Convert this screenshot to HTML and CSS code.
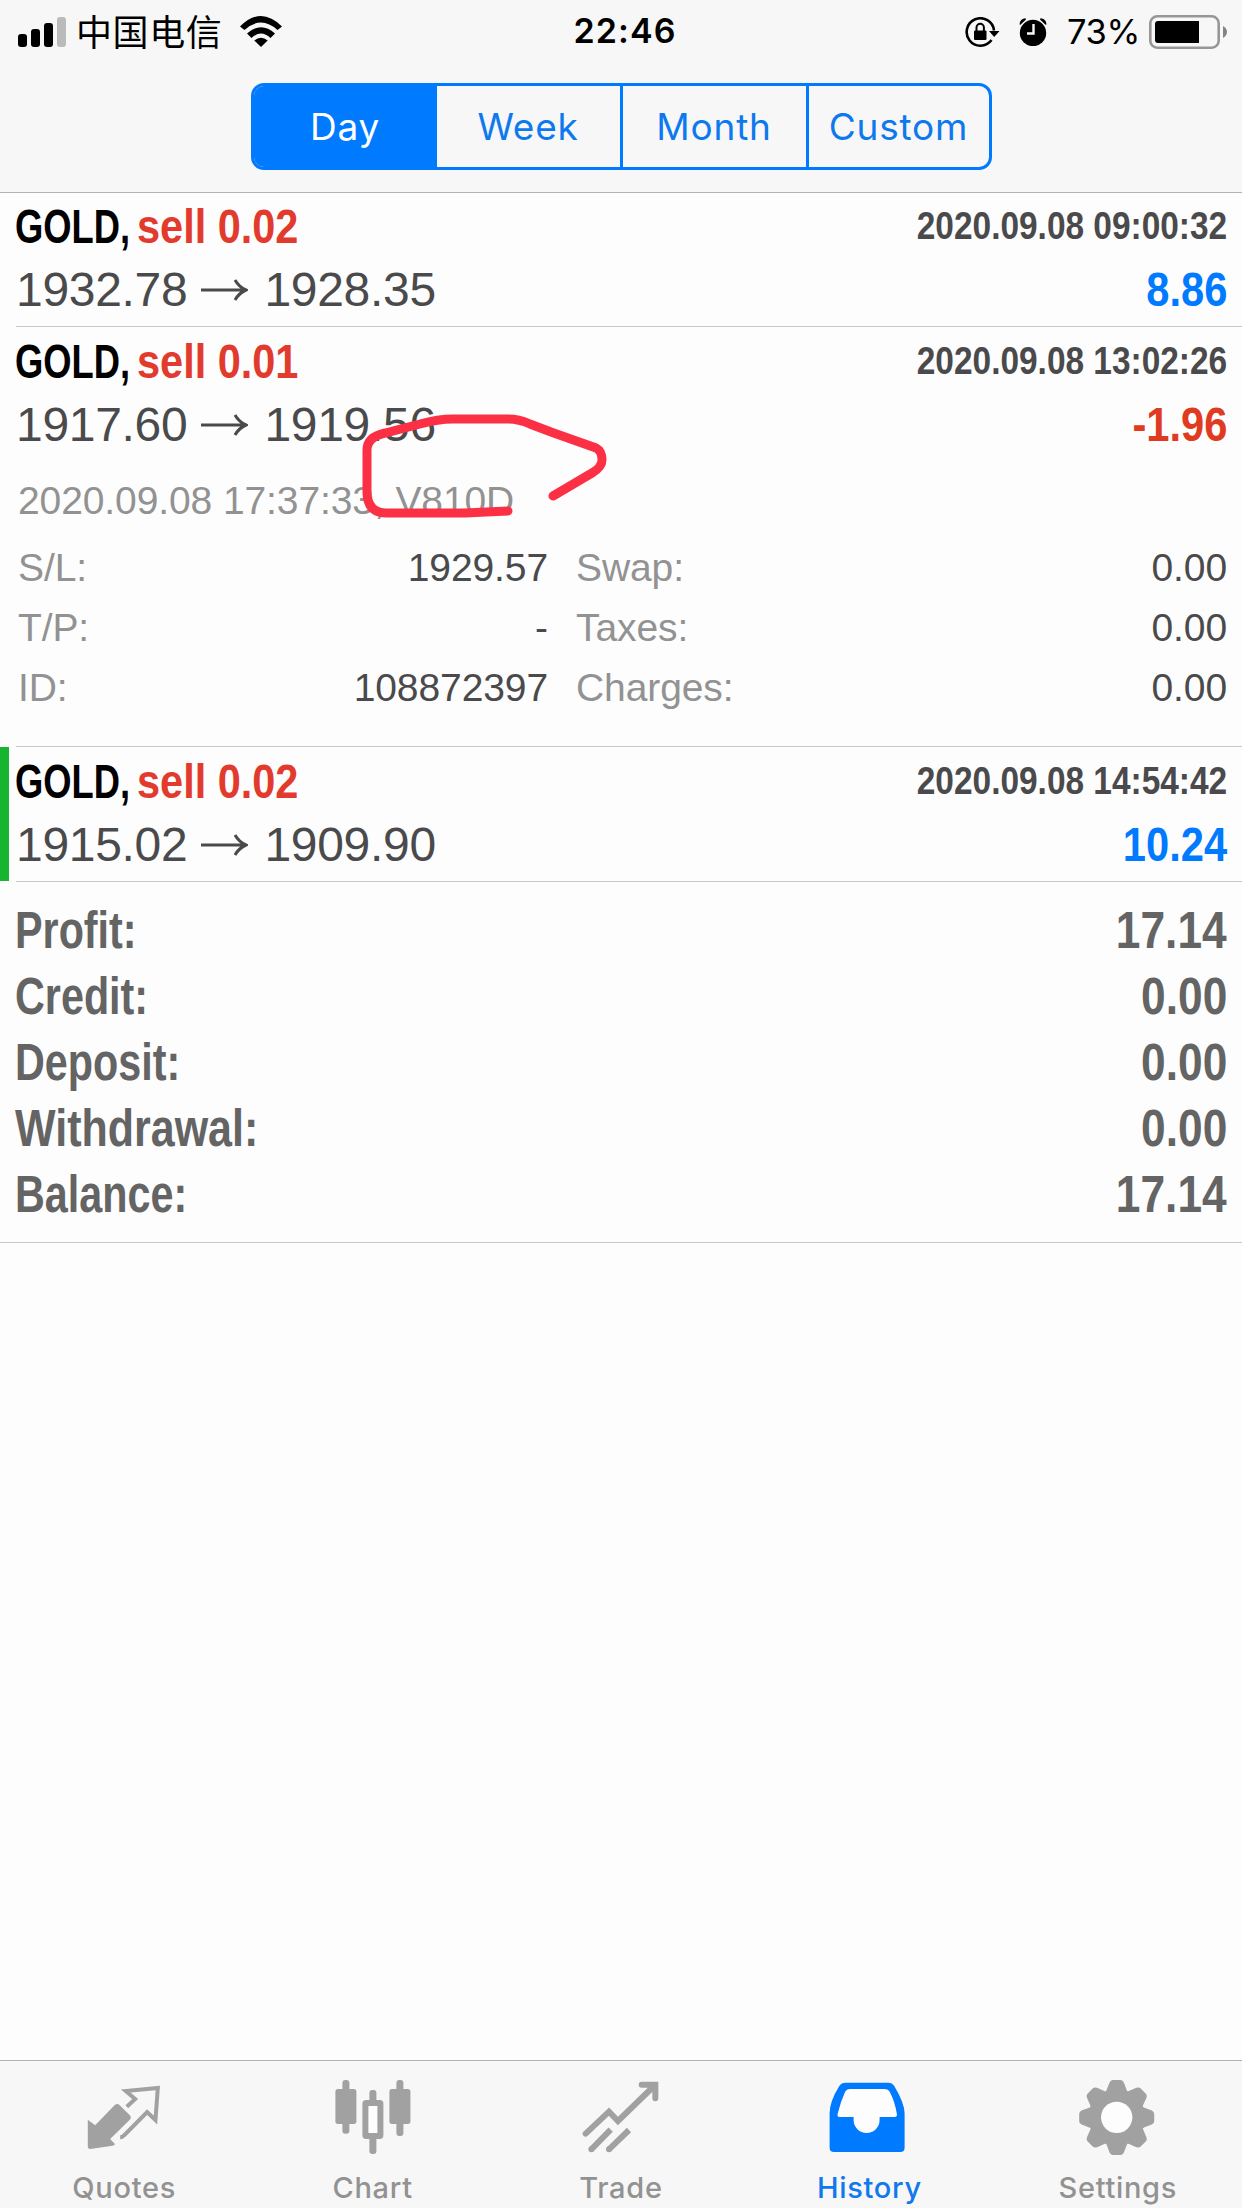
FILE: index.html
```html
<!DOCTYPE html>
<html lang="en">
<head>
<meta charset="utf-8">
<title>History</title>
<link rel="stylesheet" href="styles.css">
</head>
<body>
<div class="app">
  <header class="header">
    <div class="status">
      <div class="status-left">
        <svg class="signal" width="49" height="30" viewBox="0 0 49 30"><rect x="0" y="17" width="9" height="13" rx="3"/><rect x="13" y="12" width="9" height="18" rx="3"/><rect x="26" y="6" width="9" height="24" rx="3"/><rect x="39" y="0" width="9" height="30" rx="3" fill="#bababa"/></svg>
        <span class="carrier">中国电信</span>
        <svg class="wifi" width="42" height="31" viewBox="0 0 42 31"><path d="M0 10.500Q21 -10.500 42 10.500L37.500 14Q21 -1 4.500 14Z"/><path d="M7 17.500Q21 5 35 17.500L30.500 22Q21 13 11.500 22Z"/><path d="M14.300 24.500Q21 19 27.700 24.500L21 31Z"/></svg>
      </div>
      <div class="clock"><span>22:46</span></div>
      <div class="status-right">
        <svg class="lock" width="35" height="30" viewBox="0 0 35 30"><path d="M29 13.500A13.700 13.700 0 1 0 26.500 23" fill="none" stroke="#000" stroke-width="2.600"/><path d="M24 14h10.500L29.200 20Z"/><rect x="9" y="13.500" width="12.500" height="9.500" rx="1"/><path d="M11.500 14v-3.500a3.700 3.700 0 0 1 7.400 0V14" fill="none" stroke="#000" stroke-width="2"/></svg>
        <svg class="alarm" width="28" height="28" viewBox="0 0 28 28"><circle cx="14" cy="15" r="13.200"/><path d="M.5 6.500Q1 .5 6.500 .3L7 1.500L1.500 6.800ZM27.500 6.500Q27 .5 21.500 .3L21 1.500L26.500 6.800Z"/><path d="M14.500 6v9.500H8" fill="none" stroke="#f7f7f7" stroke-width="2.400"/></svg>
        <span class="percent">73%</span>
        <svg class="battery" width="78" height="34" viewBox="0 0 78 34"><rect x="1.300" y="1.300" width="68.400" height="31.400" rx="7" fill="none" stroke="#979797" stroke-width="2.600"/><path d="M9 6H50V28H9Q6 28 6 25V9Q6 6 9 6Z"/><path d="M74 11Q78 13.500 78 17T74 23Z" fill="#858585"/></svg>
      </div>
    </div>
    <nav class="segments"><a class="segment on">Day</a><a class="segment">Week</a><a class="segment ruled">Month</a><a class="segment ruled">Custom</a></nav>
  </header>

  <main class="content">
    <section class="deal">
      <div class="line title"><span><span class="symbol">GOLD,</span> <span class="sell">sell 0.02</span></span><span class="date">2020.09.08 09:00:32</span></div>
      <div class="line prices"><span class="move">1932.78<svg class="arrow" width="47" height="24" viewBox="0 0 47 24"><path d="M0 12H45M34 2Q38 9 45 12Q38 15 34 22"/></svg>1928.35</span><span class="value up">8.86</span></div>
    </section>
    <section class="deal open">
      <div class="line title"><span><span class="symbol">GOLD,</span> <span class="sell">sell 0.01</span></span><span class="date">2020.09.08 13:02:26</span></div>
      <div class="line prices"><span class="move">1917.60<svg class="arrow" width="47" height="24" viewBox="0 0 47 24"><path d="M0 12H45M34 2Q38 9 45 12Q38 15 34 22"/></svg>1919.56</span><span class="value down">-1.96</span></div>
      <div class="closed">2020.09.08 17:37:33, V810D</div>
      <dl class="details">
        <dt>S/L:</dt><dd>1929.57</dd><dt>Swap:</dt><dd>0.00</dd>
        <dt>T/P:</dt><dd>-</dd><dt>Taxes:</dt><dd>0.00</dd>
        <dt>ID:</dt><dd>108872397</dd><dt>Charges:</dt><dd>0.00</dd>
      </dl>
      <svg class="scribble" width="260" height="120" viewBox="355 405 260 120"><path d="M553 495L592 472Q602 466 602 459Q602 450 596 447L551 431L530 423Q519 418 508 418H453Q438 418 420 423L385 432Q367 436 367 449V492Q368 512 386 512H465L508 510"/></svg>
    </section>
    <section class="deal marked">
      <div class="line title"><span><span class="symbol">GOLD,</span> <span class="sell">sell 0.02</span></span><span class="date">2020.09.08 14:54:42</span></div>
      <div class="line prices"><span class="move">1915.02<svg class="arrow" width="47" height="24" viewBox="0 0 47 24"><path d="M0 12H45M34 2Q38 9 45 12Q38 15 34 22"/></svg>1909.90</span><span class="value up">10.24</span></div>
    </section>
    <section class="summary">
      <div class="line"><span class="label">Profit:</span><span class="amount">17.14</span></div>
      <div class="line"><span class="label">Credit:</span><span class="amount">0.00</span></div>
      <div class="line"><span class="label">Deposit:</span><span class="amount">0.00</span></div>
      <div class="line"><span class="label wide">Withdrawal:</span><span class="amount">0.00</span></div>
      <div class="line"><span class="label">Balance:</span><span class="amount">17.14</span></div>
    </section>
  </main>

  <nav class="tabs">
    <a class="tab"><svg class="icon" viewBox="237.600 90 270 270"><path d="M264 239L286 256L345 195Q352 189 359 195L390 226Q396 232 390 239L331 297L346 313Q344 316 338 317L272 327Q264 327 264 319Z"/><path d="M381 200L406 177L378 153L474 144L467 240L442 216L373 286Q368 292 361 292" fill="none" stroke="#a1a1a1" stroke-width="12"/></svg><span>Quotes</span></a>
    <a class="tab"><svg class="icon" viewBox="982.800 90 270 270"><rect x="1026" y="120" width="21" height="161" rx="9"/><rect x="1005" y="147" width="63" height="105" rx="8"/><rect x="1188" y="120" width="21" height="168" rx="9"/><rect x="1167" y="147" width="63" height="105" rx="8"/><rect x="1107" y="150" width="21" height="40" rx="9"/><rect x="1107" y="285" width="21" height="57" rx="9"/><rect x="1095" y="189" width="45" height="99" rx="2" fill="#fdfdfd" stroke="#a1a1a1" stroke-width="18"/></svg><span>Chart</span></a>
    <a class="tab"><svg class="icon" viewBox="288 90 270 270"><path d="M317 281L387 215L414 243L522 138M485 134H526V175" fill="none" stroke="#a1a1a1" stroke-width="18" stroke-linecap="round"/><path d="M334 328L392 269M387 328L447 270" fill="none" stroke="#a1a1a1" stroke-width="18"/><circle cx="334" cy="328" r="9"/><circle cx="387" cy="328" r="9"/></svg><span>Trade</span></a>
    <a class="tab on"><svg class="icon" viewBox="1033.200 90 270 270"><path d="M1098 128H1226Q1238 128 1244 138Q1275 190 1275 220V323Q1275 336 1262 336H1063Q1050 336 1050 323V220Q1050 185 1079 138Q1085 128 1098 128Z"/><path d="M1111 147H1214Q1226 147 1231 157Q1246 185 1252 223Q1253 231 1245 231H1200V240A39 39 0 0 1 1122 240V231H1080Q1072 231 1074 222Q1083 185 1096 157Q1101 147 1111 147Z" fill="#fdfdfd"/></svg><span>History</span></a>
    <a class="tab"><svg class="icon" viewBox="338.400 90 270 270"><defs><path id="tooth" d="M431 165Q440 151 446 133Q450 120 459 120H480Q489 120 493 133Q498 151 508 165Z"/></defs><circle cx="469.500" cy="232" r="82"/><use href="#tooth"/><use href="#tooth" transform="rotate(45 469.500 232.500)"/><use href="#tooth" transform="rotate(90 469.500 232.500)"/><use href="#tooth" transform="rotate(135 469.500 232.500)"/><use href="#tooth" transform="rotate(180 469.500 232.500)"/><use href="#tooth" transform="rotate(225 469.500 232.500)"/><use href="#tooth" transform="rotate(270 469.500 232.500)"/><use href="#tooth" transform="rotate(315 469.500 232.500)"/><circle cx="469.500" cy="232" r="47" fill="#fdfdfd"/></svg><span>Settings</span></a>
  </nav>
</div>
</body>
</html>
```
FILE: styles.css
```css
* { box-sizing: border-box; }
body { margin: 0; background: #fdfdfd; }
svg { display: block; flex: none; }
.app {
  display: flex;
  flex-direction: column;
  width: 1242px;
  height: 2208px;
  overflow: hidden;
  font-family: "Liberation Sans", Arial, sans-serif;
  color: #4a4a4c;
}

/* Header */
.header {
  flex: none;
  height: 192px;
  background: #f7f7f7;
  box-shadow: 0 1px #b2b2b2;
  font-family: Inter, "Noto Sans CJK SC", sans-serif;
}
.status {
  display: grid;
  grid-template-columns: 1fr auto 1fr;
  height: 60px;
  padding: 0 15px 0 18px;
  color: #000;
}
.status-left, .status-right { display: flex; align-items: center; }
.status-right { justify-content: flex-end; }
.clock { padding-left: 5px; font-size: 34px; font-weight: 600; line-height: 62px; letter-spacing: 1.1px; }
.carrier {
  margin-left: 9px;
  padding-bottom: 4px;
  font-family: "Noto Sans CJK SC", sans-serif;
  font-size: 36px;
  font-weight: 400;
  line-height: 56px;
  letter-spacing: .6px;
}
.wifi { margin-left: 18px; margin-bottom: 1px; }
.lock { margin-right: 19px; }
.alarm { margin-right: 20px; }
.percent { margin-right: 9px; font-size: 34.5px; line-height: 63px; letter-spacing: -.4px; }
.segments {
  display: grid;
  grid-template-columns: 183px 183px 186px 183px;
  width: 741px;
  height: 87px;
  margin: 23px auto 0;
  border: 3px solid #007aff;
  border-radius: 13px;
  overflow: hidden;
}
.segment {
  color: #0e79ee;
  font-size: 37px;
  line-height: 82px;
  letter-spacing: .8px;
  text-align: center;
}
.segment.ruled { border-left: 3px solid #007aff; }
.segment.on { background: #007aff; color: #fff; }

/* Deals */
.content { flex: 1; }
.line { display: flex; justify-content: space-between; padding: 0 15px; }
.deal { position: relative; height: 135px; padding-top: 3px; }
.deal::after {
  content: "";
  position: absolute;
  left: 16px;
  right: 0;
  bottom: 0;
  height: 1px;
  background: #c8c8ca;
}
.deal.open { height: 420px; }
.deal.marked::before {
  content: "";
  position: absolute;
  left: 0;
  top: 0;
  width: 9px;
  height: 134px;
  background: #16b52f;
}

/* Condensed bold lettering */
.title, .value, .summary { font-weight: 700; }
.symbol, .sell, .date, .value, .label, .amount { display: inline-block; }
.symbol, .sell, .label { transform-origin: left; }
.date, .value, .amount { transform-origin: right; }
.symbol { transform: scaleX(.757); color: #000; }
.sell { margin-left: -43px; transform: scaleX(.864); color: #e23b2e; }
.date { transform: scaleX(.857); }
.value, .amount { transform: scaleX(.868); }
.label { transform: scaleX(.81); }
.label.wide { transform: scaleX(.843); }

.title { height: 64px; font-size: 48px; line-height: 64px; }
.date { font-size: 39px; line-height: 62px; }
.prices { height: 62px; line-height: 62px; font-size: 48px; }
.move { display: flex; align-items: center; padding-left: 1px; letter-spacing: -.3px; }
.arrow { margin: 0 16px 0 14px; fill: none; stroke: #4a4a4c; stroke-width: 3px; }
.up { color: #007aff; }
.down { color: #e03a20; }
.closed {
  margin-top: 15px;
  padding-left: 18px;
  font-size: 39px;
  line-height: 60px;
  letter-spacing: -.1px;
  color: #929292;
}
.details {
  display: grid;
  grid-template-columns: 180px 350px 1fr 1fr;
  margin: 7px 15px 0 18px;
  font-size: 39px;
  line-height: 60px;
  letter-spacing: -.1px;
}
.details dt { color: #929292; }
.details dd { margin: 0; text-align: right; }
.details dt:nth-of-type(even) { padding-left: 28px; }
.scribble {
  position: absolute;
  left: 355px;
  top: 79px;
  fill: none;
  stroke: #fc3044;
  stroke-width: 9px;
  stroke-linecap: round;
}

/* Summary */
.summary {
  height: 361px;
  padding-top: 16px;
  border-bottom: 1px solid #c8c8ca;
  font-size: 51px;
  line-height: 66px;
  color: #646464;
}

/* Tab bar */
.tabs {
  display: grid;
  grid-template-columns: repeat(5, 1fr);
  height: 148px;
  flex: none;
  border-top: 1px solid #b2b2b2;
  background: #f7f7f7;
  font-family: Inter, sans-serif;
}
.tab {
  display: flex;
  flex-direction: column;
  align-items: center;
  padding-top: 9px;
  font-size: 29px;
  font-weight: 450;
  line-height: 36px;
  letter-spacing: .7px;
  color: #929292;
}
.icon { width: 90px; height: 90px; margin-bottom: 10px; fill: #a1a1a1; }
.tab.on { color: #1079ec; }
.tab.on .icon { fill: #007aff; }
```
